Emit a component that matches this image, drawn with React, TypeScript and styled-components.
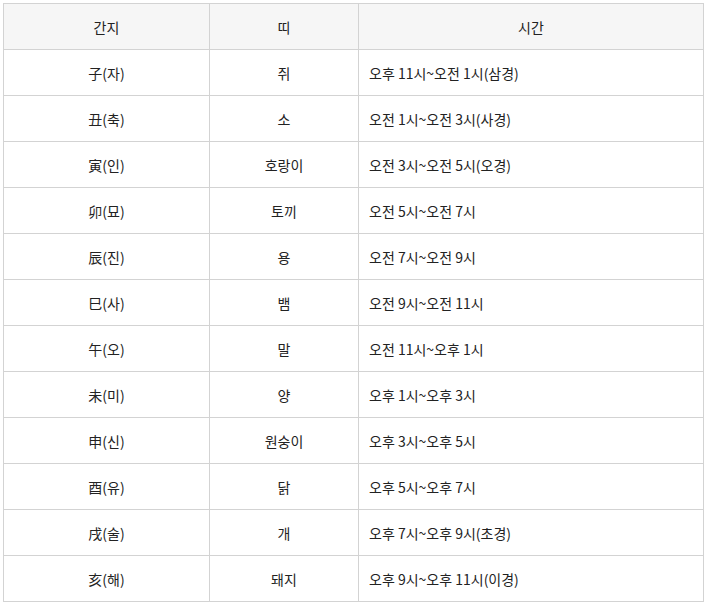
import React from "react";
import styled, { createGlobalStyle } from "styled-components";

const GlobalStyle = createGlobalStyle`
  body {
    margin: 0;
    background: #fff;
    font-family: "Noto Sans CJK KR", "Noto Sans", sans-serif;
  }
`;

const Wrapper = styled.div`
  padding: 3px;
`;

const Table = styled.table`
  width: 700px;
  table-layout: fixed;
  border-collapse: collapse;
  font-size: 14px;
  color: #222;
`;

const Row = styled.tr`
  height: 46px;
`;

const HeadCell = styled.th`
  background: #f6f6f6;
  border: 1px solid #d3d3d3;
  font-weight: normal;
  text-align: center;
  padding: 0 10px;
  line-height: 18px;
`;

const Cell = styled.td<{ $align?: "left" | "center" }>`
  border: 1px solid #d3d3d3;
  text-align: ${(p) => p.$align || "center"};
  padding: 0 10px;
  line-height: 18px;
`;

const rows: [string, string, string][] = [
  ["子(자)", "쥐", "오후 11시~오전 1시(삼경)"],
  ["丑(축)", "소", "오전 1시~오전 3시(사경)"],
  ["寅(인)", "호랑이", "오전 3시~오전 5시(오경)"],
  ["卯(묘)", "토끼", "오전 5시~오전 7시"],
  ["辰(진)", "용", "오전 7시~오전 9시"],
  ["巳(사)", "뱀", "오전 9시~오전 11시"],
  ["午(오)", "말", "오전 11시~오후 1시"],
  ["未(미)", "양", "오후 1시~오후 3시"],
  ["申(신)", "원숭이", "오후 3시~오후 5시"],
  ["酉(유)", "닭", "오후 5시~오후 7시"],
  ["戌(술)", "개", "오후 7시~오후 9시(초경)"],
  ["亥(해)", "돼지", "오후 9시~오후 11시(이경)"],
];

const App = () => {
  return (
    <Wrapper>
      <GlobalStyle />
      <Table>
        <colgroup>
          <col style={{ width: 206 }} />
          <col style={{ width: 149 }} />
          <col style={{ width: 345 }} />
        </colgroup>
        <thead>
          <Row>
            <HeadCell>간지</HeadCell>
            <HeadCell>띠</HeadCell>
            <HeadCell>시간</HeadCell>
          </Row>
        </thead>
        <tbody>
          {rows.map(([ganji, tti, time]) => (
            <Row key={ganji}>
              <Cell>{ganji}</Cell>
              <Cell>{tti}</Cell>
              <Cell $align="left">{time}</Cell>
            </Row>
          ))}
        </tbody>
      </Table>
    </Wrapper>
  );
};

export default App;
